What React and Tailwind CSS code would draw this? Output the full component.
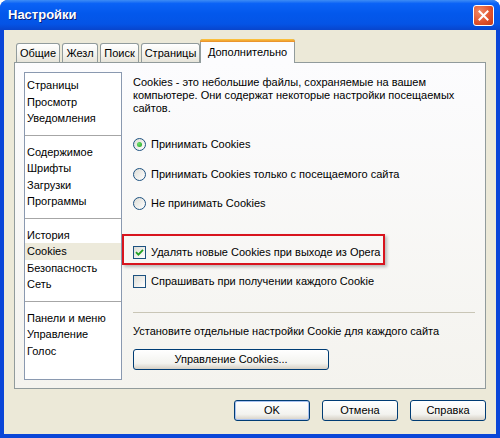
import React from "react";

const font = { fontFamily: '"Liberation Sans", Arial, sans-serif' };

function Radio({ checked, label }) {
  return (
    <div className="flex h-[16px] items-center">
      <span className="relative flex h-[13px] w-[13px] items-center justify-center rounded-full border border-[#1c5180] bg-[linear-gradient(135deg,#dcdcd6,#ffffff)]">
        {checked && (
          <span className="h-[5px] w-[5px] rounded-full bg-[radial-gradient(circle_at_35%_35%,#6ce06c,#21a121)]" />
        )}
      </span>
      <span className="ml-[5px]">{label}</span>
    </div>
  );
}

function Check({ checked, label }) {
  return (
    <div className="flex h-[16px] items-center">
      <span className="flex h-[13px] w-[13px] items-center justify-center border border-[#1c5180] bg-[linear-gradient(135deg,#dcdcd6,#ffffff)]">
        {checked && (
          <svg width="9" height="9" viewBox="0 0 9 9">
            <path d="M1 4.2 L3.4 6.6 L8 1.8" fill="none" stroke="#21a121" strokeWidth="1.8" />
          </svg>
        )}
      </span>
      <span className="ml-[5px]">{label}</span>
    </div>
  );
}

function XPButton({ children, className = "" }) {
  return (
    <div
      className={
        "flex h-[21px] items-center justify-center rounded-[3px] border border-[#003c74] bg-[linear-gradient(180deg,#ffffff,#f3f3ef_70%,#d6d0c5)] " +
        className
      }
    >
      {children}
    </div>
  );
}

const groups = [
  ["Страницы", "Просмотр", "Уведомления"],
  ["Содержимое", "Шрифты", "Загрузки", "Программы"],
  ["История", "Cookies", "Безопасность", "Сеть"],
  ["Панели и меню", "Управление", "Голос"],
];

export default function App() {
  return (
    <div
      className="flex h-[438px] w-[500px] flex-col overflow-hidden rounded-t-[8px] bg-[#0a46d8] text-[11px] text-black"
      style={font}
    >
      {/* Title bar */}
      <div className="flex h-[30px] shrink-0 items-center bg-[linear-gradient(180deg,#3d8cf5_0%,#0a62f6_12%,#0358ec_45%,#0454e6_80%,#0845cc_100%)] pl-[8px] pr-[6px]">
        <span className="text-[13px] font-bold text-white [text-shadow:1px_1px_0_#0a1e78]">Настройки</span>
        <div className="ml-auto flex h-[21px] w-[21px] items-center justify-center rounded-[3px] border border-white bg-[radial-gradient(circle_at_30%_30%,#f08a66,#e0502a_60%,#c23a18)]">
          <svg width="11" height="11" viewBox="0 0 11 11">
            <path d="M1.5 1.5 L9.5 9.5 M9.5 1.5 L1.5 9.5" stroke="#fff" strokeWidth="2" strokeLinecap="square" />
          </svg>
        </div>
      </div>

      {/* Body */}
      <div className="mx-[4px] mb-[4px] flex flex-1 flex-col bg-[#ece9d8] px-[10px] pt-[9px]">
        {/* Tabs */}
        <div className="flex h-[23px] items-end pl-[2px]">
          {[
            ["Общие", "w-[44px]"],
            ["Жезл", "w-[36px]"],
            ["Поиск", "w-[39px]"],
            ["Страницы", "w-[59px]"],
          ].map(([t, w]) => (
            <div
              key={t}
              className={
                w +
                " mr-[2px] flex h-[19px] items-center justify-center rounded-t-[3px] border border-b-0 border-[#919b9c] bg-[linear-gradient(180deg,#ffffff,#f3f2ec_60%,#e6e4da)]"
              }
            >
              {t}
            </div>
          ))}
          <div className="relative z-10 -mb-[1px] -ml-[2px] flex h-[24px] w-[95px] flex-col rounded-t-[3px] border border-b-0 border-[#919b9c] bg-[#fcfcfe]">
            <div className="-mx-[1px] -mt-[1px] h-[3px] rounded-t-[3px] bg-[linear-gradient(180deg,#ffc83c,#e68b2c)]" />
            <div className="flex flex-1 items-center justify-center pb-[1px]">Дополнительно</div>
          </div>
        </div>

        {/* Panel */}
        <div className="flex h-[327px] border border-[#919b9c] bg-[linear-gradient(180deg,#fcfcfe,#f4f3ee)] p-[9px]">
          {/* List */}
          <div className="flex h-[308px] w-[98px] shrink-0 flex-col border border-[#8a99b0] bg-white pt-[4px]">
            {groups.map((g, gi) => (
              <React.Fragment key={gi}>
                {gi > 0 && <div className="my-[8px] h-px bg-[#a6a6a6]" />}
                {g.map((it) => (
                  <div
                    key={it}
                    className={
                      "flex h-[16.5px] items-center pl-[2px] " + (it === "Cookies" ? "bg-[#edeadb]" : "")
                    }
                  >
                    {it}
                  </div>
                ))}
              </React.Fragment>
            ))}
          </div>

          {/* Right content */}
          <div className="ml-[11px] flex flex-1 flex-col">
            <div className="mt-[4px] leading-[13px]">
              Cookies - это небольшие файлы, сохраняемые на вашем
              <br />
              компьютере. Они содержат некоторые настройки посещаемых
              <br />
              сайтов.
            </div>
            <div className="mt-[21px]">
              <Radio checked label="Принимать Cookies" />
            </div>
            <div className="mt-[14px]">
              <Radio label="Принимать Cookies только с посещаемого сайта" />
            </div>
            <div className="mt-[13px]">
              <Radio label="Не принимать Cookies" />
            </div>
            <div className="relative mt-[33px]">
              <Check checked label="Удалять новые Cookies при выходе из Opera" />
              <div className="pointer-events-none absolute -left-[11px] -top-[10px] h-[31px] w-[263px] border-2 border-[#d8141e] shadow-[2px_2px_3px_rgba(0,0,0,0.25)]" />
            </div>
            <div className="mt-[13px]">
              <Check label="Спрашивать при получении каждого Cookie" />
            </div>
            <div className="mt-[23px] mr-[1px] h-px bg-[#c9c6b6]" />
            <div className="mt-[12px] leading-[13px]">Установите отдельные настройки Cookie для каждого сайта</div>
            <XPButton className="mt-[11px] h-[21px] w-[196px]">Управление Cookies...</XPButton>
          </div>
        </div>

        {/* Bottom buttons */}
        <div className="mt-[11px] flex justify-end gap-[12px]">
          <XPButton className="w-[76px] shadow-[inset_0_0_0_1px_#a9c2f0]">OK</XPButton>
          <XPButton className="w-[76px]">Отмена</XPButton>
          <XPButton className="w-[76px]">Справка</XPButton>
        </div>
      </div>
    </div>
  );
}
